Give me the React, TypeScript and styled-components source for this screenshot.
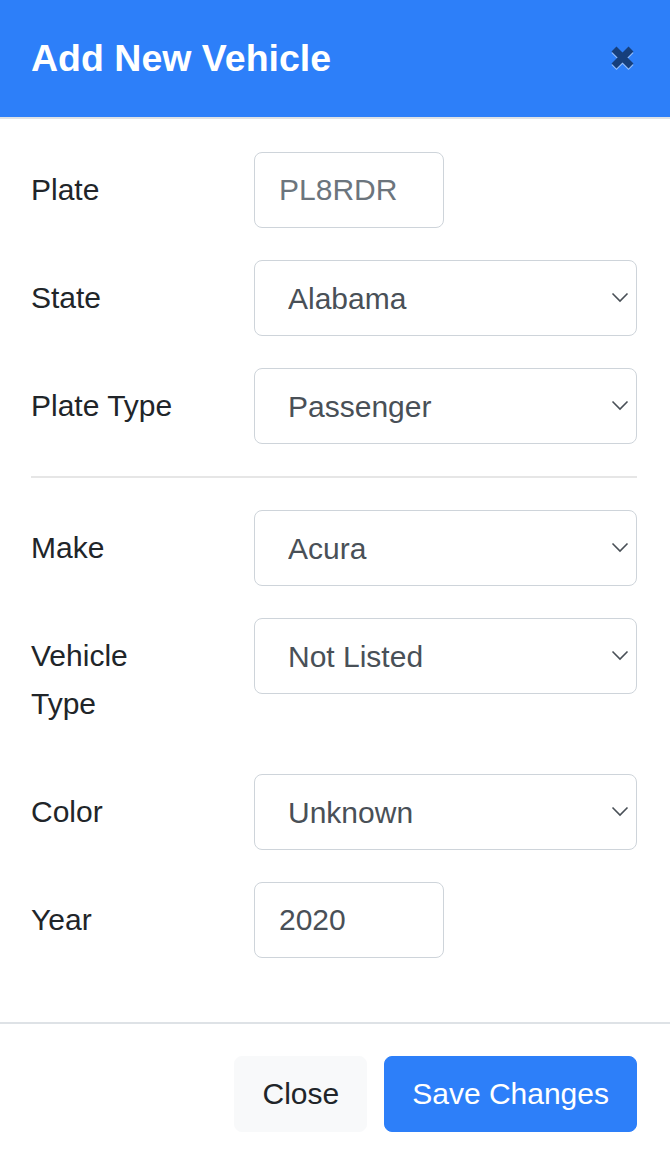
import React from 'react';
import styled, { createGlobalStyle } from 'styled-components';

const GlobalStyle = createGlobalStyle`
  html, body {
    margin: 0;
    padding: 0;
    background: #fff;
    overflow: hidden;
  }
  body {
    font-family: "Liberation Sans", Arial, sans-serif;
    color: #212529;
  }
`;

const Modal = styled.div`
  width: 670px;
  background: white;
`;

const Header = styled.div`
  height: 117px;
  padding: 0 32px 0 31px;
  display: flex;
  align-items: center;
  justify-content: space-between;
  background: #2d7ff9;
  border-bottom: 2px solid #dee2e6;
`;

const Title = styled.h5`
  margin: 0;
  color: white;
  font-size: 37.5px;
  font-weight: 700;
  line-height: 1.5;
`;

const CloseIcon = styled.button`
  width: 27px;
  height: 29px;
  padding: 0;
  margin-right: 2px;
  border: none;
  background: transparent;
  cursor: pointer;
  display: flex;
`;

const Body = styled.div`
  padding: 33px 33px 32px 31px;
`;

const Row = styled.div`
  display: grid;
  grid-template-columns: 163px 1fr;
  column-gap: 60px;
  margin-bottom: 32px;
`;

const Label = styled.label`
  padding: 14px 0;
  font-size: 30px;
  line-height: 48px;
  color: #212529;
`;

const Field = styled.div<{ $narrow?: boolean }>`
  position: relative;
  width: ${props => (props.$narrow ? '190px' : '100%')};
  height: 76px;
`;

const fieldBase = `
  box-sizing: border-box;
  width: 100%;
  height: 76px;
  border: 1px solid #ced4da;
  border-radius: 8px;
  background: #fff;
  font-family: "Liberation Sans", Arial, sans-serif;
  font-size: 30px;
  color: #495057;
  outline: none;
`;

const TextInput = styled.input`
  ${fieldBase}
  padding: 0 24px;
  &::placeholder {
    color: #6c757d;
  }
`;

const Select = styled.select`
  ${fieldBase}
  appearance: none;
  -webkit-appearance: none;
  padding: 0 48px 0 33px;
`;

const Chevron = styled.svg`
  position: absolute;
  right: 8px;
  top: 32px;
  pointer-events: none;
`;

const Divider = styled.hr`
  margin: 0 0 32px;
  border: none;
  border-top: 2px solid #e6e6e6;
`;

const Footer = styled.div`
  display: flex;
  justify-content: flex-end;
  gap: 17px;
  padding: 32px 33px 32px;
  border-top: 2px solid #dee2e6;
`;

const Button = styled.button<{ $variant?: 'primary' | 'light' }>`
  height: 76px;
  padding: 0 27px;
  border-radius: 8px;
  font-family: "Liberation Sans", Arial, sans-serif;
  font-size: 30px;
  cursor: pointer;
  ${props =>
    props.$variant === 'primary'
      ? `
    background: #2d7ff9;
    border: 1px solid #2d7ff9;
    color: white;
  `
      : `
    background: #f8f9fa;
    border: 1px solid #f8f9fa;
    color: #212529;
  `}
`;

const SelectField: React.FC<{ value: string }> = ({ value }) => (
  <Field>
    <Select defaultValue={value}>
      <option>{value}</option>
    </Select>
    <Chevron width="18" height="11" viewBox="0 0 18 11">
      <path d="M1.5 1.5l7.5 7.5 7.5-7.5" fill="none" stroke="#495057" strokeWidth="1.6" />
    </Chevron>
  </Field>
);

const App: React.FC = () => {
  return (
    <>
      <GlobalStyle />
      <Modal>
        <Header>
          <Title>Add New Vehicle</Title>
          <CloseIcon aria-label="Close">
            <svg width="27" height="29" viewBox="0 0 27 29">
              <g transform="translate(0 1.5)" stroke="#96bffc" strokeWidth="7">
                <path d="M5 5l17 17M22 5L5 22" />
              </g>
              <g stroke="#163f7c" strokeWidth="7">
                <path d="M5 5l17 17M22 5L5 22" />
              </g>
            </svg>
          </CloseIcon>
        </Header>
        <Body>
          <Row>
            <Label>Plate</Label>
            <Field $narrow>
              <TextInput placeholder="PL8RDR" />
            </Field>
          </Row>
          <Row>
            <Label>State</Label>
            <SelectField value="Alabama" />
          </Row>
          <Row>
            <Label>Plate Type</Label>
            <SelectField value="Passenger" />
          </Row>
          <Divider />
          <Row>
            <Label>Make</Label>
            <SelectField value="Acura" />
          </Row>
          <Row>
            <Label>Vehicle Type</Label>
            <SelectField value="Not Listed" />
          </Row>
          <Row>
            <Label>Color</Label>
            <SelectField value="Unknown" />
          </Row>
          <Row>
            <Label>Year</Label>
            <Field $narrow>
              <TextInput defaultValue="2020" />
            </Field>
          </Row>
        </Body>
        <Footer>
          <Button>Close</Button>
          <Button $variant="primary">Save Changes</Button>
        </Footer>
      </Modal>
    </>
  );
};

export default App;
